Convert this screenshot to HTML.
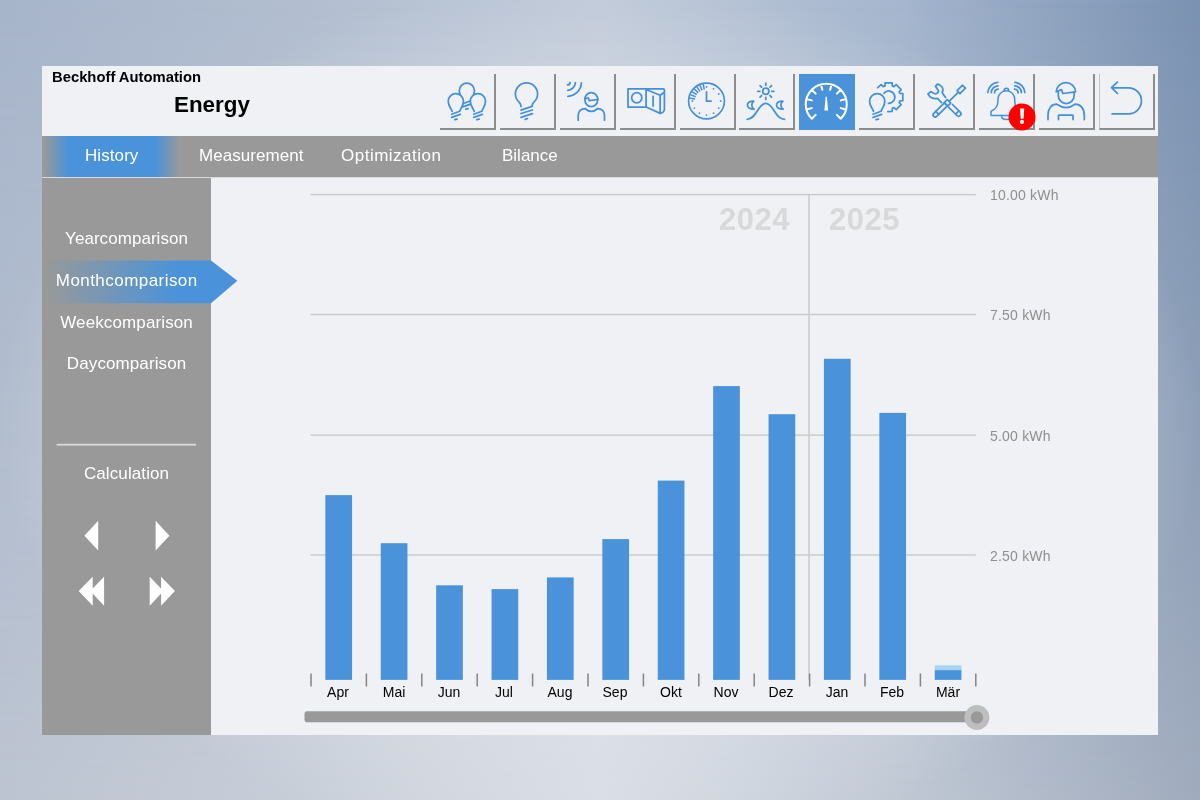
<!DOCTYPE html>
<html><head><meta charset="utf-8"><title>Energy</title>
<style>
*{margin:0;padding:0;box-sizing:border-box}
html,body{width:1200px;height:800px;overflow:hidden}
body{font-family:"Liberation Sans",sans-serif;position:relative;
 background:linear-gradient(90deg,#a7b5cb 0%,#b2bed0 25%,#c0cad9 50%,#a5b6ce 75%,#7a92b2 100%);
}
.abs{position:absolute}
.tab,.sitem,.ylab,.mon,.year,.hdr{will-change:transform}
#bg2{left:0;top:0;width:1200px;height:800px;
 background:linear-gradient(90deg,#bcc4d1 0%,#c8ced8 25%,#d8dce4 50%,#c0c8d4 75%,#a0abbd 100%);
 -webkit-mask-image:linear-gradient(180deg,rgba(0,0,0,0) 0%,#000 100%);mask-image:linear-gradient(180deg,rgba(0,0,0,0) 0%,#000 100%)}
#glow{left:0;top:0;width:1200px;height:800px;
 background:radial-gradient(ellipse 600px 440px at 600px 420px,rgba(226,230,237,.85) 0%,rgba(226,230,237,.55) 60%,rgba(226,230,237,0) 100%)}
#panel{left:42px;top:66px;width:1116px;height:668.5px;background:#eff1f5}
#tabbar{left:42px;top:136px;width:1116px;height:41.5px;background:#999}
#tabline{left:42px;top:177px;width:1116px;height:1px;background:#dadada}
#tabsel{left:42px;top:136px;width:137px;height:41.5px;
 background:linear-gradient(90deg,#999 0px,#999 2px,#4a93da 26px,#4a93da 114px,#999 137px)}
.tab{top:136px;height:41px;line-height:39px;color:#fff;font-size:17px;white-space:nowrap}
#side{left:42px;top:178px;width:169px;height:556.5px;background:#999}
.sitem{left:42px;width:169px;text-align:center;color:#fff;font-size:17px;line-height:20px;white-space:nowrap}
.btn{top:74px;width:56px;height:56px;border-right:2px solid #8d8d8d;border-bottom:2px solid #8d8d8d}
.btn.act{background:#4a93da;border:none}
.grid{left:311px;width:665px;height:1.4px;background:#c9c9c9}
.ylab{left:989.5px;letter-spacing:.2px;font-size:14px;color:#8f8f8f;line-height:16px;white-space:nowrap}
.bar{background:#4a93da;width:26.7px}
.tick{top:673.5px;width:1.5px;height:13px;background:#848484}
.mon{top:684px;width:56px;text-align:center;font-size:14px;line-height:16px;color:#000}
.year{top:202.3px;letter-spacing:.5px;font-size:31px;font-weight:bold;color:#d9d9d9;line-height:36px;white-space:nowrap}
</style></head><body>

<div class="abs" id="bg2"></div><div class="abs" id="glow"></div>
<div class="abs" id="panel"></div>
<div class="abs hdr" style="left:52px;top:68.5px;font-size:14.8px;font-weight:bold;color:#000;line-height:17px;white-space:nowrap">Beckhoff Automation</div>
<div class="abs hdr" style="left:173.8px;top:92px;font-size:22.4px;font-weight:bold;color:#000;line-height:26px;white-space:nowrap">Energy</div>
<div class="abs btn" style="left:440px"></div>
<div class="abs btn" style="left:500px"></div>
<div class="abs btn" style="left:560px"></div>
<div class="abs btn" style="left:620px"></div>
<div class="abs btn" style="left:680px"></div>
<div class="abs btn" style="left:739px"></div>
<div class="abs btn act" style="left:799px"></div>
<div class="abs btn" style="left:859px"></div>
<div class="abs btn" style="left:919px"></div>
<div class="abs btn" style="left:979px"></div>
<div class="abs btn" style="left:1039px"></div>
<div class="abs btn" style="left:1099px;border-left:1px solid #c4c4c4"></div>
<div class="abs" id="tabbar"></div><div class="abs" id="tabsel"></div><div class="abs" id="tabline"></div>
<div class="abs tab" style="left:85.0px;letter-spacing:0.08px">History</div>
<div class="abs tab" style="left:199.0px;letter-spacing:0.05px">Measurement</div>
<div class="abs tab" style="left:340.5px;letter-spacing:0.5px">Optimization</div>
<div class="abs tab" style="left:502.2px;letter-spacing:0px">Bilance</div>
<div class="abs" id="side"></div>
<svg class="abs" style="left:0;top:0" width="1200" height="800" viewBox="0 0 1200 800"><defs><linearGradient id="sg" x1="44" x2="178" y1="0" y2="0" gradientUnits="userSpaceOnUse"><stop offset="0" stop-color="#999"/><stop offset="1" stop-color="#4a93da"/></linearGradient></defs><path d="M42 260.6 H211 L237.4 280.7 L211 303.2 H42 Z" fill="url(#sg)"/><rect x="56.6" y="443.8" width="139.4" height="1.8" fill="#dadada"/><g fill="#fff"><path d="M84.4 535.7 L98.2 520.7 V550.4 Z"/><path d="M169.4 535.7 L155.6 520.7 V550.4 Z"/><path d="M78.7 591 L92.7 576.8 V605.7 Z M90.3 591 L104.1 576.8 V605.7 Z"/><path d="M163.5 591 L149.7 576.8 V605.7 Z M174.9 591 L161.1 576.8 V605.7 Z"/></g></svg>
<div class="abs sitem" style="top:228.7px;letter-spacing:0.05px;text-indent:0.05px">Yearcomparison</div>
<div class="abs sitem" style="top:270.6px;letter-spacing:0.45px;text-indent:0.45px">Monthcomparison</div>
<div class="abs sitem" style="top:313.1px;letter-spacing:0.12px;text-indent:0.12px">Weekcomparison</div>
<div class="abs sitem" style="top:353.9px;letter-spacing:0.1px;text-indent:0.1px">Daycomparison</div>
<div class="abs sitem" style="top:464.3px;letter-spacing:0.1px;text-indent:0.1px">Calculation</div>
<svg class="abs" style="left:0;top:0" width="1200" height="800" viewBox="0 0 1200 800"><rect x="310.6" y="193.9" width="665.2" height="1.4" fill="#c9c9c9"/><rect x="310.6" y="313.8" width="665.2" height="1.4" fill="#c9c9c9"/><rect x="310.6" y="434.4" width="665.2" height="1.4" fill="#c9c9c9"/><rect x="310.6" y="554.3" width="665.2" height="1.4" fill="#c9c9c9"/><rect x="808.3" y="194.5" width="1.5" height="485.5" fill="#cbcbcb"/><rect x="325.35" y="495.1" width="26.7" height="184.8" fill="#4a93da"/><rect x="380.75" y="543.2" width="26.7" height="136.7" fill="#4a93da"/><rect x="436.15" y="585.3" width="26.7" height="94.6" fill="#4a93da"/><rect x="491.55" y="589.1" width="26.7" height="90.8" fill="#4a93da"/><rect x="546.95" y="577.4" width="26.7" height="102.5" fill="#4a93da"/><rect x="602.35" y="539.1" width="26.7" height="140.8" fill="#4a93da"/><rect x="657.75" y="480.6" width="26.7" height="199.3" fill="#4a93da"/><rect x="713.15" y="386.1" width="26.7" height="293.8" fill="#4a93da"/><rect x="768.55" y="414.2" width="26.7" height="265.7" fill="#4a93da"/><rect x="823.95" y="358.75" width="26.7" height="321.15" fill="#4a93da"/><rect x="879.35" y="412.9" width="26.7" height="267" fill="#4a93da"/><rect x="934.75" y="670" width="26.7" height="9.9" fill="#4a93da"/><rect x="934.75" y="665.4" width="26.7" height="4.8" fill="#a9d4f1"/><rect x="310.25" y="673.5" width="1.5" height="13" fill="#848484"/><rect x="365.65" y="673.5" width="1.5" height="13" fill="#848484"/><rect x="421.05" y="673.5" width="1.5" height="13" fill="#848484"/><rect x="476.45" y="673.5" width="1.5" height="13" fill="#848484"/><rect x="531.85" y="673.5" width="1.5" height="13" fill="#848484"/><rect x="587.25" y="673.5" width="1.5" height="13" fill="#848484"/><rect x="642.65" y="673.5" width="1.5" height="13" fill="#848484"/><rect x="698.05" y="673.5" width="1.5" height="13" fill="#848484"/><rect x="753.45" y="673.5" width="1.5" height="13" fill="#848484"/><rect x="808.85" y="673.5" width="1.5" height="13" fill="#848484"/><rect x="864.25" y="673.5" width="1.5" height="13" fill="#848484"/><rect x="919.65" y="673.5" width="1.5" height="13" fill="#848484"/><rect x="975.05" y="673.5" width="1.5" height="13" fill="#848484"/><rect x="304.5" y="711.3" width="673" height="11" rx="2.5" fill="#999"/><circle cx="976.9" cy="717.5" r="12.5" fill="#bebebe"/><circle cx="976.9" cy="717.5" r="6.2" fill="#999"/></svg>
<div class="abs ylab" style="top:186.9px">10.00 kWh</div>
<div class="abs ylab" style="top:306.9px">7.50 kWh</div>
<div class="abs ylab" style="top:427.5px">5.00 kWh</div>
<div class="abs ylab" style="top:547.5px">2.50 kWh</div>
<div class="abs year" style="left:718.6px">2024</div><div class="abs year" style="left:828.6px">2025</div>
<div class="abs mon" style="left:310.1px">Apr</div>
<div class="abs mon" style="left:365.5px">Mai</div>
<div class="abs mon" style="left:420.9px">Jun</div>
<div class="abs mon" style="left:476.3px">Jul</div>
<div class="abs mon" style="left:531.7px">Aug</div>
<div class="abs mon" style="left:587.1px">Sep</div>
<div class="abs mon" style="left:642.5px">Okt</div>
<div class="abs mon" style="left:697.9px">Nov</div>
<div class="abs mon" style="left:753.3px">Dez</div>
<div class="abs mon" style="left:808.7px">Jan</div>
<div class="abs mon" style="left:864.1px">Feb</div>
<div class="abs mon" style="left:919.5px">Mär</div>
<svg class="abs" style="left:0;top:0" width="1200" height="800" viewBox="0 0 1200 800" fill="none" stroke="#4490db" stroke-width="1.75" stroke-linecap="round" stroke-linejoin="round">
<g transform="translate(440,74)"><path d="M23.15 26.8 C22.65 24.3 19.25 21.8 19.25 16.8 A7.6 7.6 0 0 1 34.45 16.8 C34.45 21.8 31.45 24.1 30.8 26.8 L22.65 29.7 M22.65 32.8 L31.35 29.9 M25.8 35.2 L28.15 34.55"/><path d="M12.1 37.3 C11.6 34.8 8.2 32.3 8.2 27.3 A7.6 7.6 0 0 1 23.4 27.3 C23.4 32.3 20.4 34.6 19.75 37.3 L11.6 40.2 Z M34.2 37.3 C33.7 34.8 30.3 32.3 30.3 27.3 A7.6 7.6 0 0 1 45.5 27.3 C45.5 32.3 42.5 34.6 41.85 37.3 L33.7 40.2 Z" fill="#eff1f5" stroke="none"/><path d="M12.1 37.3 C11.6 34.8 8.2 32.3 8.2 27.3 A7.6 7.6 0 0 1 23.4 27.3 C23.4 32.3 20.4 34.6 19.75 37.3 L11.6 40.2 M11.6 43.3 L20.3 40.4 M14.75 45.7 L17.1 45.05 M34.2 37.3 C33.7 34.8 30.3 32.3 30.3 27.3 A7.6 7.6 0 0 1 45.5 27.3 C45.5 32.3 42.5 34.6 41.85 37.3 L33.7 40.2 M33.7 43.3 L42.4 40.4 M36.85 45.7 L39.2 45.05"/></g>
<g transform="translate(500,74)"><path d="M21.05 32.7 Q20.9 30.2 19.37 28.4 A11.1 11.1 0 1 1 33.63 28.4 Q32.1 30.2 32.05 32.45 L21 36.1 M21 39.5 L32.45 36 M21 43.35 L32.45 39.7 M25.3 45.4 L27.5 44.55"/></g>
<g transform="translate(560,74)"><ellipse cx="31.3" cy="25.6" rx="6.45" ry="7.0"/><path d="M10.05 8.39 A2.65 2.65 0 0 1 7.49 10.95 M15.4 8.58 A8 8 0 0 1 7.68 16.3 M21.39 8.79 A14 14 0 0 1 7.89 22.29 M24.9 25 L28.2 23.7 L29.3 26.6 L37.8 25.5 M18.2 46.2 V41.2 A6.7 6.7 0 0 1 24.9 34.5 Q28 37.4 31.3 37.4 Q34.6 37.4 37.8 34.5 A6.7 6.7 0 0 1 44.5 41.2 V46.2"/></g>
<g transform="translate(620,74)"><circle cx="16.75" cy="23.8" r="5.1"/><path d="M8 14.9 H26.1 V33 H8 Z M26.1 14.9 H43.2 Q44.4 14.9 44.4 16.1 V35.5 Q44.2 38.4 40.2 39.5 M26.1 15.5 L40.15 21.25 V39.4 L26.1 33 M40.15 21.25 L44.2 18.3 M33.1 22.3 V32.1"/></g>
<g transform="translate(680,74)"><circle cx="26.5" cy="27" r="17.9" stroke-width="1.65"/><path d="M26.5 17.8 V27.2 H31.1 "/><path d="M15.08 24.99 L9.36 23.98 M15.71 22.75 L10.31 20.62 M16.77 20.68 L11.91 17.52 M18.23 18.87 L14.09 14.8 M20.01 17.38 L16.77 12.57 M22.06 16.28 L19.84 10.92 M24.29 15.61 L23.18 9.92 " stroke-width="1.5" stroke-linecap="butt"/><circle cx="26.5" cy="12.9" r="0.9" fill="#4490db" stroke="none"/><circle cx="33.55" cy="14.79" r="0.9" fill="#4490db" stroke="none"/><circle cx="38.71" cy="19.95" r="0.9" fill="#4490db" stroke="none"/><circle cx="40.6" cy="27" r="0.9" fill="#4490db" stroke="none"/><circle cx="38.71" cy="34.05" r="0.9" fill="#4490db" stroke="none"/><circle cx="33.55" cy="39.21" r="0.9" fill="#4490db" stroke="none"/><circle cx="26.5" cy="41.1" r="0.9" fill="#4490db" stroke="none"/><circle cx="19.45" cy="39.21" r="0.9" fill="#4490db" stroke="none"/><circle cx="14.29" cy="34.05" r="0.9" fill="#4490db" stroke="none"/><circle cx="12.4" cy="27" r="0.9" fill="#4490db" stroke="none"/></g>
<g transform="translate(739,74)"><circle cx="26.8" cy="17.3" r="3.1"/><path d="M32.8 17.3 L34.9 17.3 M31.04 21.54 L32.53 23.03 M26.8 23.3 L26.8 25.4 M22.56 21.54 L21.07 23.03 M20.8 17.3 L18.7 17.3 M22.56 13.06 L21.07 11.57 M26.8 11.3 L26.8 9.2 M31.04 13.06 L32.53 11.57 M8.2 45.3 C17.5 45.3 19 29.4 26.8 29.4 C34.6 29.4 36 45.3 45.6 45.3 M14.8 27.2 C6.3 27.4 6.3 35 15.1 35.15 C12.1 33.5 12.1 29 14.8 27.2 Z M43.9 27.2 C35.4 27.4 35.4 35 44.2 35.15 C41.2 33.5 41.2 29 43.9 27.2 Z "/></g>
<g transform="translate(799,74)"><g stroke="#fff" stroke-width="2.05"><path d="M12.75 44.75 A20.5 20.5 0 1 1 41.75 44.75 M16.64 40.86 L12.75 44.75 M12.76 34.13 L7.45 35.56 M12.76 26.37 L7.45 24.94 M16.64 19.64 L12.75 15.75 M23.37 15.76 L21.94 10.45 M31.13 15.76 L32.56 10.45 M37.86 19.64 L41.75 15.75 M41.74 26.37 L47.05 24.94 M41.74 34.13 L47.05 35.56 M37.86 40.86 L41.75 44.75 "/><path d="M26.65 22.75 H27.85 L29.1 36.6 H25.4 Z" fill="#fff" stroke="none"/></g></g>
<g transform="translate(859,74)"><path d="M24.94 19.2 A6.15 6.15 0 1 1 29.44 29.3  M18.63 13.57 L22.13 10.64 L24.29 12.64 L26 11.93 L26.12 8.98 L33.18 8.98 L33.3 11.93 L35.01 12.64 L37.17 10.64 L42.16 15.63 L40.16 17.79 L40.87 19.5 L43.82 19.62 L43.82 26.68 L40.87 26.8 L40.16 28.51 L42.16 30.67 L37.17 35.66 L35.01 33.66 L33.3 34.37 L33.18 37.32 L28.89 37.73"/><path d="M14.5 37.3 C14 34.8 10.6 32.3 10.6 27.3 A7.6 7.6 0 0 1 25.8 27.3 C25.8 32.3 22.8 34.6 22.15 37.3 L14 40.2 Z" fill="#eff1f5" stroke="none"/><path d="M14.5 37.3 C14 34.8 10.6 32.3 10.6 27.3 A7.6 7.6 0 0 1 25.8 27.3 C25.8 32.3 22.8 34.6 22.15 37.3 L14 40.2 M14 43.3 L22.7 40.4 M17.15 45.7 L19.5 45.05"/></g>
<g transform="translate(919,74)"><path d="M26.6 23.6 L24.4 20.6 Q22.6 18.4 23.9 16.2 Q24.4 13.2 20.3 10.7 L18.4 10.1 L16.45 12.3 L18.4 15.1 Q20.2 17.2 18.9 18.6 Q17.2 20.4 15.1 19.5 L11.8 17.55 L9 20 L11.2 23.05 Q14.6 25.3 17.8 24.4 Q19.4 24.6 20.6 26.6 L22.5 28.55 M33.5 30.5 L41.2 38.2 A2.3 2.3 0 0 1 37.9 41.5 L29.6 33.2 M39.9 36.9 L36.6 40.2"/><g transform="translate(16.2,40.9) rotate(-44.4)"><path d="M0 -2.1 H15 V2.1 H0 A2.1 2.1 0 0 1 0 -2.1 Z" fill="#eff1f5"/><path d="M3 -2.1 V2.1 M15 -2.5 H19.3 V2.5 H15 Z M19.3 0 H32.6 M32.6 -2.05 H40.3 V2.05 H32.6 Z"/></g></g>
<g transform="translate(979,74)"><path d="M15.51 18.89 A4 4 0 0 1 19.22 15.11 M35.48 15.11 A4 4 0 0 1 39.19 18.89 M12.21 18.72 A7.3 7.3 0 0 1 18.99 11.82 M35.71 11.82 A7.3 7.3 0 0 1 42.49 18.72 M8.81 18.54 A10.7 10.7 0 0 1 18.75 8.43 M35.95 8.43 A10.7 10.7 0 0 1 45.89 18.54 "/><path d="M25.05 16.6 A2.3 2.3 0 0 1 29.65 16.6 M12.05 41.4 V37.2 C16.2 35.6 18.95 31.5 18.95 27.6 V25.2 A8.4 8.4 0 0 1 35.75 25.2 V27.6 C35.75 31.5 38.5 35.6 42.65 37.2 V41.4 Z M22.5 41.6 C22.7 46.8 32 46.8 32.2 41.6" stroke-width="1.5"/></g>
<g transform="translate(1039,74)"><path d="M17.3 17.8 A9.6 9.2 0 0 1 36.5 17.8 L23.9 19.5 L22.5 15.6 Z M19.3 18.3 V21.6 A7.95 7.95 0 0 0 35.2 21.6 V18.3 M9 45.6 V41.2 C9 34.5 12.5 30.2 17.8 30.2 Q22.5 33.5 27.2 33.5 Q31.5 33.5 36 30.2 C41.5 30.2 45.3 34.5 45.3 41.2 V45.6 M19.5 45.6 V41.8 Q19.5 41.2 20.1 41.2 H33.45 Q34.05 41.2 34.05 41.8 V45.6"/></g>
<g transform="translate(1099,74)"><path d="M12.7 13.75 H29.4 A13.1 13.1 0 0 1 29.4 39.95 H13.1 M18.4 8.1 L12.5 13.7 L18.4 19.4"/></g>
<circle cx="1022" cy="117" r="13.5" fill="#ff0000" stroke="none"/>
<path d="M1020.1 108.5 H1024.2 L1023.6 118.7 H1020.7 Z" fill="#fff" stroke="none"/><circle cx="1022" cy="121.9" r="2.05" fill="#fff" stroke="none"/>
</svg>
</body></html>
